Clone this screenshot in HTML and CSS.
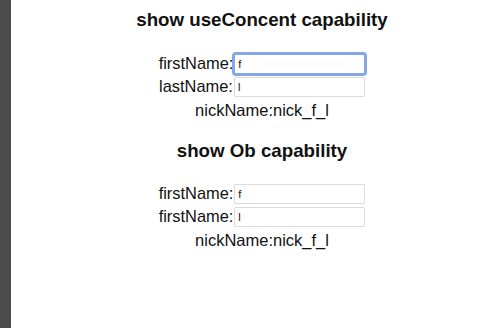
FILE: index.html
```html
<!DOCTYPE html>
<html>
<head>
<meta charset="utf-8">
<link rel="stylesheet" href="styles.css">
</head>
<body>
<div class="sidebar"></div>
<div class="main">
  <section class="block">
    <h3 class="title">show useConcent capability</h3>
    <div class="form">
      <div class="row"><span class="label">firstName:</span><input class="field focused" value="f"></div>
      <div class="row"><span class="label">lastName:</span><input class="field" value="l"></div>
      <div class="nick">nickName:nick_f_l</div>
    </div>
  </section>
  <section class="block second">
    <h3 class="title">show Ob capability</h3>
    <div class="form">
      <div class="row"><span class="label">firstName:</span><input class="field" value="f"></div>
      <div class="row"><span class="label">firstName:</span><input class="field" value="l"></div>
      <div class="nick">nickName:nick_f_l</div>
    </div>
  </section>
</div>
</body>
</html>
```
FILE: styles.css
```css
html, body {
  margin: 0;
  padding: 0;
  height: 100%;
  background: #ffffff;
}
body {
  display: flex;
  font-family: "Liberation Sans", Arial, sans-serif;
  color: #111;
  overflow: hidden;
}
.sidebar {
  width: 11px;
  flex: none;
  background: #4b4b4b;
}
.main {
  flex: 1;
  padding: 9px 0 0 17px;
  text-align: center;
}
.title {
  margin: 0;
  font-size: 18.72px;
  font-weight: bold;
  line-height: 22px;
}
.form {
  margin-top: 21px;
}
.second {
  margin-top: 21px;
}
.second .form {
  margin-top: 20px;
}
.row {
  height: 23px;
  display: flex;
  align-items: center;
  justify-content: center;
  font-size: 16.4px;
}
.label {
  margin-right: 1px;
}
.field {
  width: 131px;
  height: 20px;
  box-sizing: border-box;
  border: 1px solid #dcdcdc;
  border-radius: 1px;
  padding: 0 3px;
  font-family: "Liberation Sans", Arial, sans-serif;
  font-size: 11px;
  color: #111;
  outline: none;
  background: #fff;
}
.focused {
  box-shadow: 0 0 0 2px rgba(110, 150, 225, 0.85);
  border-color: #8aa8e0;
  border-radius: 2px;
}
.nick {
  margin-top: 3px;
  font-size: 16.5px;
  line-height: 18px;
}
```
